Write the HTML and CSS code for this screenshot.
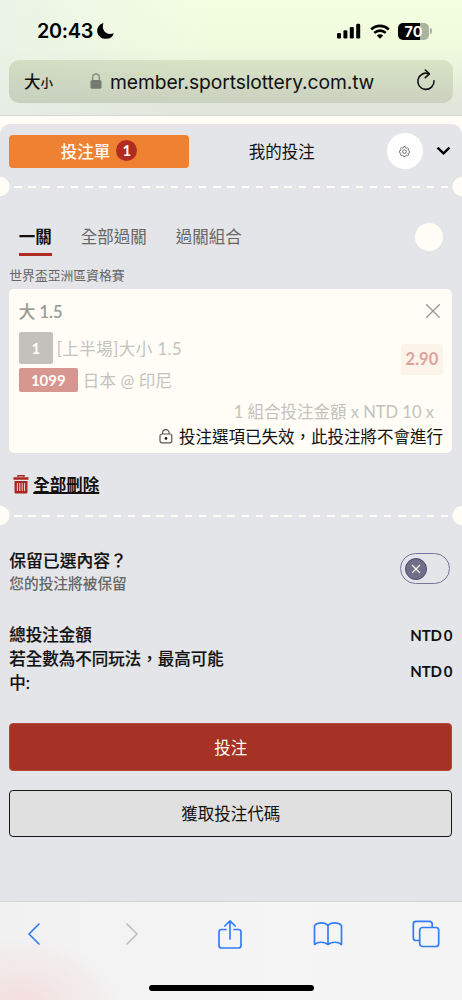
FILE: index.html
```html
<!DOCTYPE html>
<html lang="zh-Hant">
<head>
<meta charset="utf-8">
<meta name="viewport" content="width=device-width, initial-scale=1">
<title>投注單</title>
<link rel="stylesheet" href="styles.css">
</head>
<body>
<header class="browser-top">
  <div class="status">
    <span class="clock">20:43</span>
    <svg class="moon" width="18" height="18" viewBox="0 0 18 18"><path d="M5.800 1.200A8 8 0 0 0 9 16.800 8 8 0 0 0 16.800 11.200C12.500 13 8 11.500 6.400 7.500 5.600 5.300 5.700 3.200 6.500 1.300Z"/></svg>
    <svg class="signal" width="24" height="16" viewBox="0 0 24 16"><rect x="0" y="10" width="4" height="5.5" rx="1.2"/><rect x="6.4" y="7.3" width="4" height="8.2" rx="1.2"/><rect x="12.8" y="4" width="4" height="11.5" rx="1.2"/><rect x="19.2" y="0.8" width="4" height="14.7" rx="1.2"/></svg>
    <svg class="wifi" width="20" height="15" viewBox="0 0 20 15"><path d="M1.2 5.4C6.2.7 13.8.7 18.8 5.4" fill="none" stroke="#000" stroke-width="2.7"/><path d="M4.3 8.9C7.6 5.8 12.4 5.8 15.7 8.9" fill="none" stroke="#000" stroke-width="2.6"/><path d="M6.8 11.5C8.7 9.8 11.3 9.8 13.2 11.5L10 14.7Z"/></svg>
    <span class="battery">70</span><i class="nub"></i>
  </div>
  <div class="address">
    <span class="aa">大<small>小</small></span>
    <svg class="lock" width="12" height="16" viewBox="0 0 12 16"><rect x=".5" y="7" width="11" height="8.8" rx="1.6" fill="#747b6f"/><path d="M2.7 7.5V4.3a3.3 3.3 0 0 1 6.6 0v3.2" fill="none" stroke="#8a9184" stroke-width="1.5"/></svg>
    <span class="url">member.sportslottery.com.tw</span>
    <svg class="reload" width="20" height="24" viewBox="0 0 20 24"><g fill="none" stroke="#111" stroke-width="1.6" stroke-linecap="round" stroke-linejoin="round"><path d="M12.7 5.7A8.1 8.1 0 1 0 18 12.9"/><path d="M9.3 2L13.4 5.9 9.3 9.7"/></g></svg>
  </div>
</header>

<main class="page">
  <section class="slip">
    <nav class="slip-tabs">
      <span class="slip-tab active">投注單<b class="count">1</b></span>
      <span class="slip-tab">我的投注</span>
      <span class="settings"><svg width="11" height="11" viewBox="0 0 24 24" fill="none" stroke="#555" stroke-width="1.7" stroke-linejoin="round"><path d="M10 1.500h4l.8 2.800 1.500.7L19 3.700 21 6l-1.200 2.600.7 1.400 2.500 1v3.500l-2.700 1-.6 1.500L21 19.500 18.500 21.500l-2.500-1.200-1.500.6-1 2.100h-3.200l-1-2.300-1.500-.6L5 21.500 3 19.200l1.200-2.500-.6-1.500L1 14.200v-3.500l2.700-1 .6-1.500L3 5.500 5.300 3.500 8 4.900l1.300-.6Z"/><circle cx="12" cy="12.300" r="4"/></svg></span>
      <svg class="chev" width="15" height="10" viewBox="0 0 15 10"><path d="M1.500 1.600L7.500 7.300 13.500 1.600" fill="none" stroke="#000" stroke-width="2.500"/></svg>
    </nav>

    <div class="tear"><i class="dashes"></i></div>

    <nav class="modes">
      <span class="mode on">一關</span><span class="mode">全部過關</span><span class="mode">過關組合</span>
      <i class="dot"></i>
    </nav>

    <p class="league">世界盃亞洲區資格賽</p>
    <article class="bet">
      <div class="bet-head"><span>大 1.5</span>
        <svg width="16" height="16" viewBox="0 0 16 16"><path d="M1.200 1.200L14.800 14.800M14.800 1.200L1.200 14.800" fill="none" stroke="#999994" stroke-width="1.300"/></svg>
      </div>
      <div class="bet-main">
        <div class="lines">
          <div class="line"><b class="tag gray">1</b><span class="market">[上半場]大小 1.5</span></div>
          <div class="line"><b class="tag red">1099</b><span class="teams">日本 @ 印尼</span></div>
        </div>
        <b class="odds">2.90</b>
      </div>
      <p class="stake">1 組合投注金額 x NTD 10 x</p>
      <p class="invalid">
        <svg width="14" height="15" viewBox="0 0 14 15"><g fill="none" stroke="#555" stroke-width="1.200"><rect x="1" y="5" width="11.800" height="8.800" rx="2"/><path d="M3.600 5V4a3.300 3.300 0 0 1 6.600 0v1"/></g><circle cx="7" cy="9.400" r="1.300" fill="#111"/></svg>
        <span>投注選項已失效，此投注將不會進行</span>
      </p>
    </article>

    <div class="clear">
      <svg width="16" height="19" viewBox="0 0 16 19"><path d="M5 2V.8h6V2" fill="none" stroke="#a8281f" stroke-width="1.400"/><path d="M.5 2.200h15v2.600H.5ZM1.500 6h13v11.200q0 1.300-1.300 1.300H2.800q-1.300 0-1.300-1.300Z" fill="#a8281f"/><path d="M4.400 8v8M6.800 8v8M9.200 8v8M11.600 8v8" stroke="#eadbd8" stroke-width="1"/></svg>
      <span>全部刪除</span>
    </div>

    <div class="tear second"><i class="dashes"></i></div>

    <div class="keep">
      <div><p class="keep-title">保留已選內容？</p><p class="keep-note">您的投注將被保留</p></div>
      <span class="toggle"><i class="knob"><svg width="10" height="10" viewBox="0 0 10 10"><path d="M1 1L9 9M9 1L1 9" stroke="#fff" stroke-width="1.100"/></svg></i></span>
    </div>

    <dl class="totals">
      <div class="total"><dt>總投注金額</dt><dd>NTD 0</dd></div>
      <div class="total"><dt>若全數為不同玩法，最高可能中:</dt><dd>NTD 0</dd></div>
    </dl>

    <div class="actions">
      <span class="btn primary">投注</span>
      <span class="btn">獲取投注代碼</span>
    </div>
  </section>
</main>

<footer class="toolbar">
  <div class="tools">
    <svg width="30" height="24" viewBox="0 0 14 24"><path d="M12 2L2 12 12 22" class="ico"/></svg>
    <svg width="30" height="24" viewBox="0 0 14 24"><path d="M2 2L12 12 2 22" class="ico off"/></svg>
    <svg width="30" height="31" viewBox="0 0 26 31"><path d="M9 10.500H4.500Q2 10.500 2 13V26.500Q2 29 4.500 29H21.500Q24 29 24 26.500V13Q24 10.500 21.500 10.500H17M13 20V2M7.800 7L13 1.800 18.200 7" class="ico"/></svg>
    <svg width="30" height="26" viewBox="0 0 30 26"><path d="M15 4.500C12 1 5 1 1.500 4.500V23.500C5 20.500 11 20.500 15 23.500 19 20.500 25 20.500 28.500 23.500V4.500C25 1 18 1 15 4.500V23.500" class="ico"/></svg>
    <svg width="30" height="28" viewBox="0 0 28 28"><rect x="7.700" y="7.500" width="19" height="19" rx="2.800" class="ico"/><path d="M7.500 20.500H4Q1.300 20.500 1.300 17.800V4Q1.300 1.300 4 1.300H17.500Q20.200 1.300 20.200 4V7" class="ico"/></svg>
  </div>
  <div class="home"></div>
</footer>
</body>
</html>
```

FILE: styles.css
```css
* { box-sizing: border-box; }
body {
  margin: 0;
  width: 462px;
  height: 1000px;
  overflow: hidden;
  display: flex;
  flex-direction: column;
  font-family: Lato, "Noto Sans CJK TC", sans-serif;
  font-size: 16.5px;
  color: #111;
  background: #fffdf6;
}
p, dl, dd { margin: 0; }
i, b { font-style: normal; }
svg { display: block; flex: none; }

/* Browser chrome, top */
.browser-top {
  height: 116px;
  flex: none;
  border-bottom: 1px solid #d2d6ce;
  background:
    linear-gradient(90deg, rgba(232,240,232,.75), rgba(240,250,230,0) 45%),
    linear-gradient(#f4ffe2, #f0fbde 40%, #e1e6da 90%);
}
.status { height: 60px; display: flex; align-items: center; padding: 2px 31px 0 37px; }
.clock {
  width: 57px;
  font: 600 19.800px/24px Inter, sans-serif;
  letter-spacing: -.3px;
  color: #000;
}
.moon { margin: 0 auto 0 3px; }
.signal { margin-right: 9px; }
.wifi { margin-right: 8px; }
.battery {
  width: 31px;
  height: 17px;
  border-radius: 5px;
  background: linear-gradient(90deg, #000 70%, #aab39f 70%);
  color: #fff;
  text-align: center;
  font: 700 14.5px/17px Inter, sans-serif;
}
.nub { width: 2px; height: 6px; margin-left: 1px; margin-right: -1px; border-radius: 0 2px 2px 0; background: #aab39f; }
.address {
  height: 43px;
  margin: 0 9px;
  padding: 0 17px 0 15px;
  border-radius: 10px;
  background: linear-gradient(90deg, rgba(195,205,190,.3), rgba(215,225,195,0) 50%), linear-gradient(#d9e4c5, #cad1c0);
  display: flex;
  align-items: center;
}
.aa { width: 65px; font: 500 16.5px/24px "Noto Sans CJK TC", sans-serif; white-space: nowrap; }
.aa small { font-size: 12.500px; }
.lock { margin: -2px 8px 0 1px; }
.url { flex: 1; padding-top: 1px; font: 400 19.3px/24px Inter, sans-serif; letter-spacing: -.1px; white-space: nowrap; }
.reload { margin-top: -3px; }

/* Bet slip */
.page { flex: 1; padding-top: 8px; }
.slip {
  height: 777px;
  border-radius: 10px 10px 0 0;
  background: #e4e5e8;
  display: flex;
  flex-direction: column;
  padding: 9px 9.600px 0 9.300px;
}
.slip-tabs { height: 36px; display: flex; align-items: center; padding-right: 1.500px; flex: none; }
.slip-tab { flex: none; width: 186px; height: 33px; display: flex; align-items: center; justify-content: center; padding-bottom: 1px; }
.slip-tab.active {
  width: 179.500px;
  border-radius: 4px;
  background: #ef8132;
  color: #fffaf0;
  font-weight: 500;
}
.count {
  width: 21px;
  height: 21px;
  margin-left: 6px;
  border-radius: 50%;
  background: #b02c22;
  font: 700 15px/21px Lato, sans-serif;
  text-align: center;
}
.settings { width: 36px; height: 36px; margin-left: 12px; border-radius: 50%; background: #fff; display: grid; place-items: center; }
.chev { margin-left: auto; }

.tear {
  flex: none;
  height: 19px;
  margin: 8px -9.600px 0 -9.300px;
  display: flex;
  align-items: center;
  background:
    radial-gradient(circle at 0 50%, #fffdf6 9.2px, transparent 9.8px),
    radial-gradient(circle at 100% 50%, #fffdf6 9.2px, transparent 9.8px);
}
.dashes {
  flex: 1;
  height: 2.500px;
  margin: 1px 13.5px 0 14px;
  background: repeating-linear-gradient(90deg, #fffdf6 0 7.5px, transparent 7.5px 14.23px);
}

.modes { height: 60px; margin-top: 28px; padding: 0 9.500px; display: flex; gap: 29px; color: #666; flex: none; }
.mode { height: 32px; line-height: 26px; }
.mode.on { color: #111; font-weight: 700; border-bottom: 3.500px solid #b02c22; }
.dot { width: 28px; height: 28px; margin: -1px 0 0 auto; border-radius: 50%; background: #fffdf6; }
.league { height: 21px; margin-top: -18px; line-height: 18px; font-size: 12.800px; color: #666; flex: none; }

.bet { flex: none; height: 164px; margin-top: 2px; padding: 11px 9.500px 0; border-radius: 5px; background: #fffdf6; }
.bet-head { height: 21px; display: flex; justify-content: space-between; align-items: center; color: #999994; font-weight: 500; padding-right: 2px; }
.bet-head span { -webkit-text-stroke: .15px #999994; }
.bet-main { height: 60px; margin-top: 11px; display: flex; justify-content: space-between; }
.lines { display: grid; row-gap: 4px; align-content: start; }
.line { display: flex; align-items: center; color: #c2c3bd; }
.market { letter-spacing: .48px; }
.teams { letter-spacing: .15px; }
.tag { display: grid; place-items: center; border-radius: 2px; color: #fffdf6; font-size: 15px; }
.tag.gray { width: 34px; height: 32px; background: #c2c1bb; margin-right: 4px; }
.tag.red { width: 59px; height: 24px; background: #d89691; margin-right: 5px; }
.odds { width: 42px; height: 31px; margin-top: 12px; border-radius: 4px; background: #fcf3eb; color: #dda49d; line-height: 30px; text-align: center; }
.stake { height: 24px; margin-top: 8px; padding-right: 9px; line-height: 24px; text-align: right; color: #c2c3bd; }
.invalid { height: 24px; display: flex; align-items: center; justify-content: flex-end; gap: 6px; white-space: nowrap; }

.clear { height: 24px; margin: 19px 0 0 4px; display: flex; align-items: center; gap: 4px; font-weight: 700; flex: none; }
.clear span { text-decoration: underline; text-decoration-thickness: 1.500px; text-underline-offset: 1px; }
.second { margin-top: 10px; }

.keep { height: 48px; margin-top: 22px; padding-right: 2.500px; display: flex; justify-content: space-between; align-items: center; flex: none; }
.keep-title { font-size: 16.800px; line-height: 24px; font-weight: 500; -webkit-text-stroke: .15px #111; }
.keep-note { font-size: 14.700px; line-height: 20px; color: #666; font-weight: 500; }
.toggle { width: 50px; height: 31px; margin-top: -5px; border: 1px solid #77759a; border-radius: 16px; padding: 4px; }
.knob { width: 22px; height: 22px; border: 1px solid #484671; border-radius: 50%; background: #706f87; display: grid; place-items: center; }

.totals { height: 72px; margin-top: 28px; flex: none; }
.total { display: flex; justify-content: space-between; align-items: center; line-height: 24px; }
.total dt { width: 218px; -webkit-text-stroke: .15px #111; font-weight: 500; }
.total dd { font-size: 15px; font-weight: 700; word-spacing: -1.500px; letter-spacing: -.15px; }

.actions { margin-top: 28px; display: grid; row-gap: 19px; flex: none; }
.btn { height: 47.500px; border: 1px solid #171717; border-radius: 4px; display: grid; place-items: center; background: #e0e0e0; }
.btn.primary { border-color: #b5483b; background: #a63225; color: #fffaf4; }

/* Browser chrome, bottom */
.toolbar {
  height: 99px;
  flex: none;
  border-top: 1px solid #d5d5d7;
  background: radial-gradient(ellipse 100px 70px at 20px 105px, #f4dddd, rgba(244,221,221,0)), linear-gradient(90deg, #f1f1f1, #f5f5f5 60%, #f4f4f4);
}
.tools { height: 64px; padding: 0 21px 0 19px; display: flex; justify-content: space-between; align-items: center; }
.ico { fill: none; stroke: #347cf6; stroke-width: 1.700; stroke-linecap: round; stroke-linejoin: round; }
.ico.off { stroke: #bebebe; }
.home { width: 165px; height: 6px; margin: 19px auto 0; border-radius: 3px; background: #000; }
```
